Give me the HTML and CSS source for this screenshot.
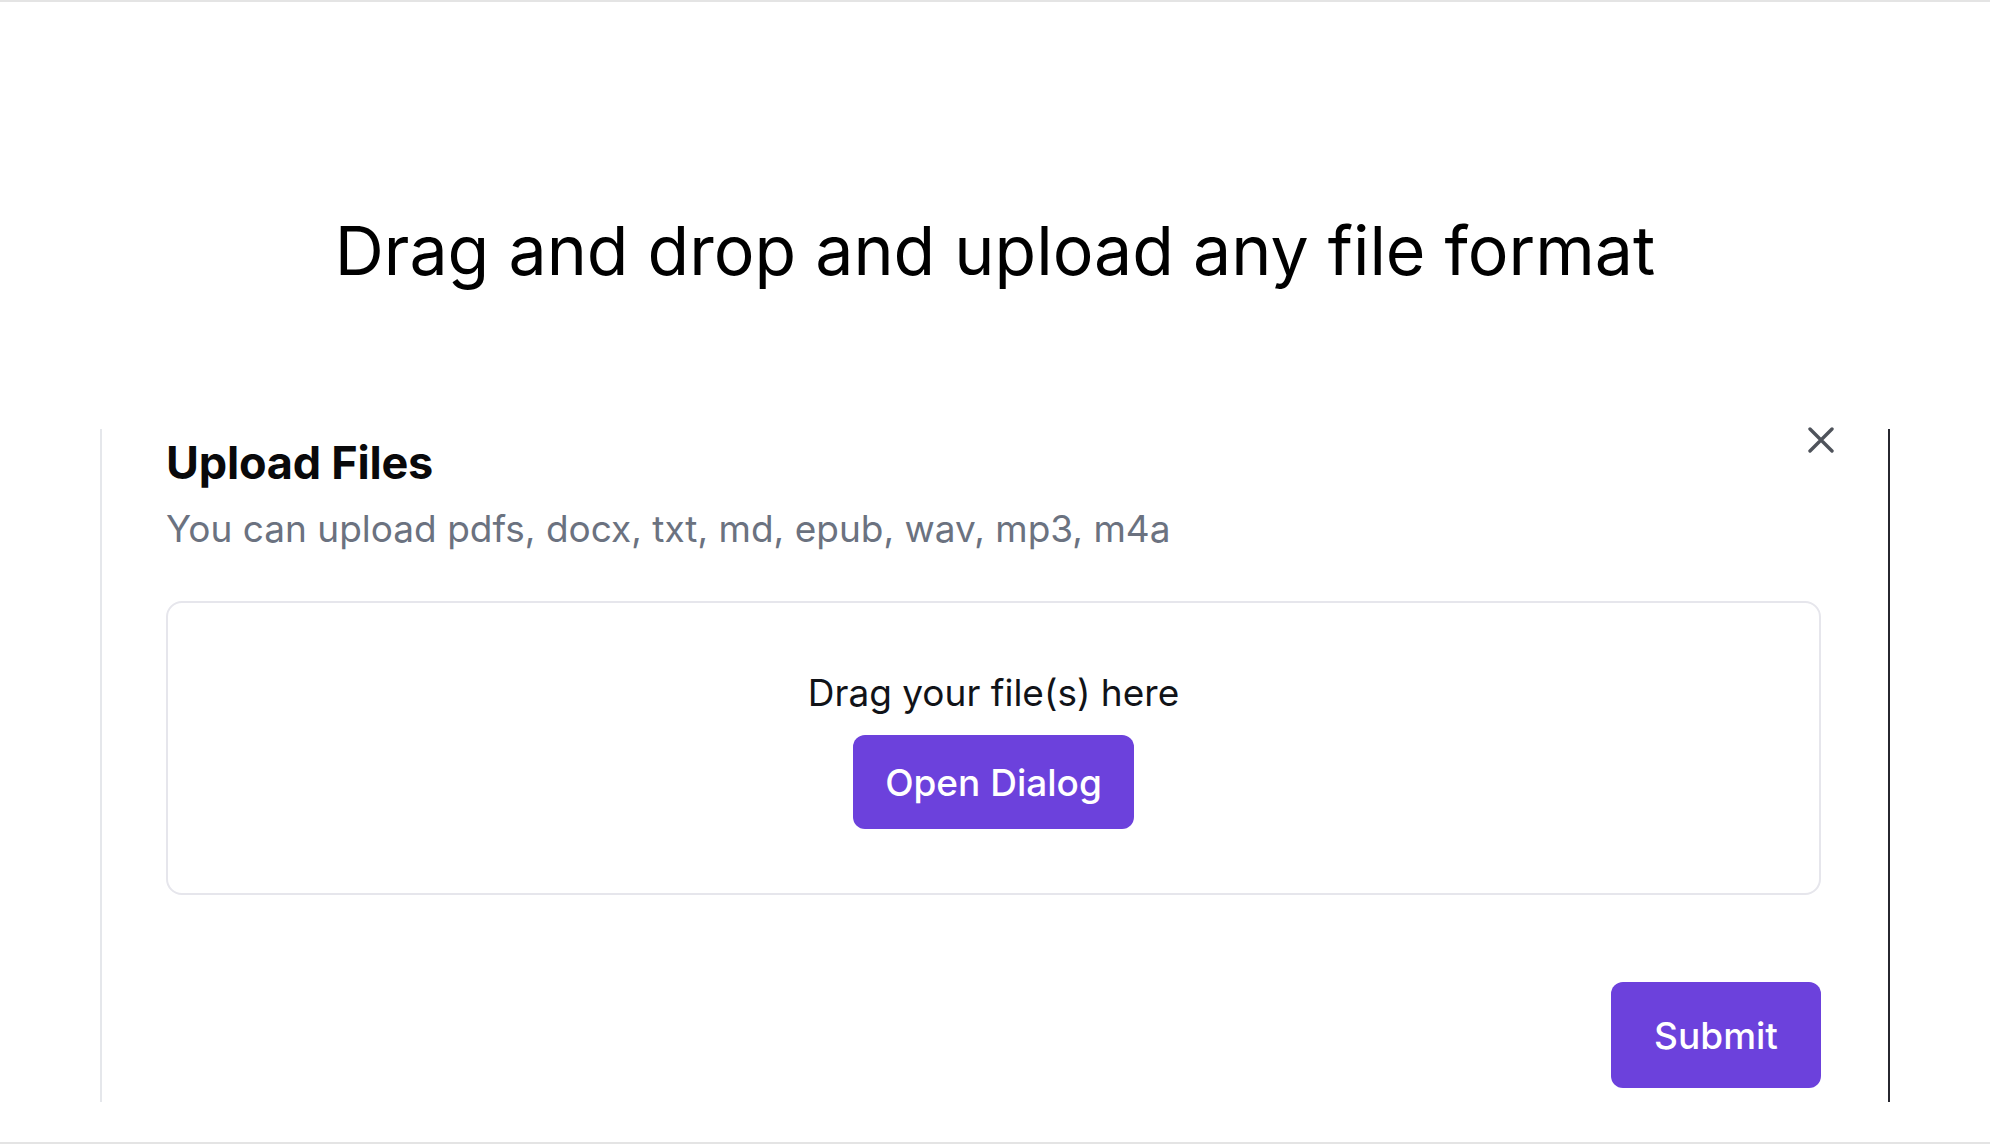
FILE: index.html
```
<!DOCTYPE html>
<html lang="en">
<head>
<meta charset="utf-8">
<title>Upload</title>
<link rel="stylesheet" href="styles.css">
</head>
<body>
<div class="page">
  <h1 class="title">Drag and drop and upload any file format</h1>
  <section class="panel">
    <button class="close" aria-label="Close">
      <svg width="26" height="26" viewBox="0 0 26 26" fill="none" stroke="currentColor" stroke-width="3.4" stroke-linecap="round"><path d="M2 2L24 24M24 2L2 24"/></svg>
    </button>
    <h2 class="panel-title">Upload Files</h2>
    <p class="panel-sub">You can upload pdfs, docx, txt, md, epub, wav, mp3, m4a</p>
    <div class="dropzone">
      <p class="drop-text">Drag your file(s) here</p>
      <button class="btn btn-open">Open Dialog</button>
    </div>
    <div class="actions">
      <button class="btn btn-submit">Submit</button>
    </div>
  </section>
</div>
</body>
</html>
```

FILE: styles.css
```
* { box-sizing: border-box; }
html, body { margin: 0; padding: 0; background: #fff; }
body { font-family: Inter, "Noto Sans", "Liberation Sans", sans-serif; }

.page {
  height: 1144px;
  border-top: 2px solid #e4e4e4;
  border-bottom: 2px solid #e4e4e4;
  display: flex;
  flex-direction: column;
  align-items: center;
  overflow: hidden;
}

.title {
  margin: 214px 0 0;
  font-size: 68px;
  line-height: 68px;
  font-weight: 400;
  color: #000;
  letter-spacing: 0;
}

.panel {
  position: relative;
  margin-top: 145px;
  width: 1790px;
  height: 673px;
  border-left: 2px solid #e5e7eb;
  border-right: 2px solid #27272f;
  padding: 12px 67px 0 64px;
  display: flex;
  flex-direction: column;
}

.close {
  position: absolute;
  top: -4px;
  right: 52px;
  width: 30px;
  height: 30px;
  padding: 2px;
  border: 0;
  background: transparent;
  color: #4f535b;
  display: flex;
  align-items: center;
  justify-content: center;
}

.panel-title {
  margin: 0;
  font-size: 45px;
  line-height: 44px;
  font-weight: 700;
  color: #09090b;
  letter-spacing: -0.2px;
}

.panel-sub {
  margin: 26px 0 0;
  font-size: 37px;
  line-height: 36px;
  color: #6b7280;
}

.dropzone {
  margin-top: 54px;
  height: 294px;
  border: 2px solid #e6e6ec;
  border-radius: 16px;
  display: flex;
  flex-direction: column;
  align-items: center;
  padding-top: 72px;
  gap: 24px;
}

.drop-text {
  margin: 0;
  font-size: 37px;
  line-height: 36px;
  color: #111318;
}

.btn {
  font-family: inherit;
  border: 0;
  background: #6c41dc;
  color: #fff;
  font-weight: 500;
  font-size: 37px;
  border-radius: 12px;
  display: flex;
  align-items: center;
  justify-content: center;
}

.btn-open {
  width: 281px;
  height: 94px;
}

.actions {
  margin-top: 87px;
  display: flex;
  justify-content: flex-end;
}

.btn-submit {
  width: 210px;
  height: 106px;
  font-size: 37px;
}
```
